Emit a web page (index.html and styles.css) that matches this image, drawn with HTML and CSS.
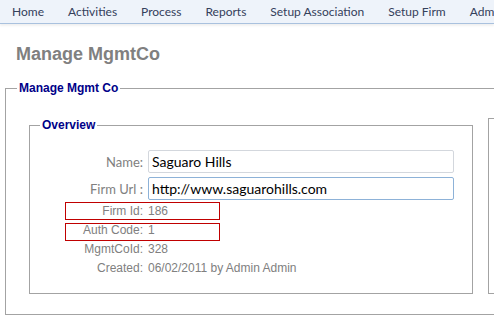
FILE: index.html
```html
<!DOCTYPE html>
<html lang="en">
<head>
    <meta charset="UTF-8">
    <meta name="viewport" content="width=device-width, initial-scale=1.0">
    <title>Manage MgmtCo</title>
    <link rel="stylesheet" href="styles.css">
</head>
<body>
    <nav class="menu">
        <ul>
            <li>Home</li>
            <li>Activities</li>
            <li>Process</li>
            <li>Reports</li>
            <li>Setup Association</li>
            <li>Setup Firm</li>
            <li>Administration</li>
        </ul>
    </nav>
    <main class="page">
        <h1 class="page-title">Manage MgmtCo</h1>
        <fieldset class="group">
            <legend>Manage Mgmt Co</legend>
            <div class="group-body">
                <fieldset class="panel overview">
                    <legend>Overview</legend>
                    <div class="field">
                        <label for="name">Name:</label>
                        <input type="text" id="name" value="Saguaro Hills">
                    </div>
                    <div class="field field-last">
                        <label for="firmUrl">Firm Url :</label>
                        <input type="text" id="firmUrl" class="active" value="http://www.saguarohills.com">
                    </div>
                    <div class="info mark">
                        <span class="key">Firm Id:</span>
                        <span>186</span>
                    </div>
                    <div class="info mark mark-low">
                        <span class="key">Auth Code:</span>
                        <span>1</span>
                    </div>
                    <div class="info">
                        <span class="key">MgmtCoId:</span>
                        <span>328</span>
                    </div>
                    <div class="info">
                        <span class="key">Created:</span>
                        <span>06/02/2011 by Admin Admin</span>
                    </div>
                </fieldset>
                <fieldset class="panel side"></fieldset>
            </div>
        </fieldset>
    </main>
</body>
</html>
```

FILE: styles.css
```css
html, body {
    margin: 0;
    padding: 0;
    overflow: hidden;
    background-color: #fff;
}

.menu {
    height: 23px;
    background-color: #eef3fa;
    border-bottom: 1px solid #a9c1de;
    box-shadow: 0 2px 2px #f1f1f1;
}

.menu ul {
    list-style: none;
    margin: 0;
    padding: 0;
    display: flex;
    white-space: nowrap;
}

.menu li {
    padding: 0 12px;
    font: 12px/23px Lato, sans-serif;
    color: #34405a;
}

.page {
    padding: 19px 0 0 5px;
}

.page-title {
    margin: 0 0 16px 11px;
    font: bold 18px/22px "Liberation Sans", Arial, sans-serif;
    color: #808080;
}

fieldset {
    margin: 0;
    min-width: 0;
    border: 1px solid #a3a3a3;
}

legend {
    padding: 0 2px;
    font: bold 12px/14px "Liberation Sans", Arial, sans-serif;
    color: #000088;
}

.group {
    width: 900px;
    padding: 23px 0 20px 11px;
}

.group-body {
    display: flex;
    gap: 15px;
    margin-left: 12px;
}

.panel {
    padding: 18px 0 15px 10px;
}

.overview {
    width: 444px;
    box-sizing: border-box;
}

.side {
    width: 400px;
}

.field {
    display: flex;
    align-items: center;
    height: 23px;
    margin-bottom: 4px;
}

.field-last {
    margin-bottom: 2px;
}

.field label {
    width: 103px;
    margin-right: 5px;
    text-align: right;
    font: 13px Lato, sans-serif;
    color: #808080;
}

.field input {
    width: 306px;
    height: 23px;
    box-sizing: border-box;
    margin: 0;
    padding: 0 3px;
    border: 1px solid #d3d7dd;
    border-radius: 2px;
    font: 14px Lato, sans-serif;
    color: #000;
    outline: none;
}

.field input.active {
    border-color: #8db2d8;
}

.info {
    position: relative;
    display: flex;
    font: 12px/19px "Liberation Sans", Arial, sans-serif;
    color: #808080;
}

.info .key {
    width: 103px;
    margin-right: 5px;
    text-align: right;
}

.mark::after {
    content: "";
    position: absolute;
    left: 25px;
    top: 0;
    width: 155px;
    height: 18px;
    box-sizing: border-box;
    border: 1px solid #c00000;
}

.mark-low::after {
    top: 2px;
}
```
